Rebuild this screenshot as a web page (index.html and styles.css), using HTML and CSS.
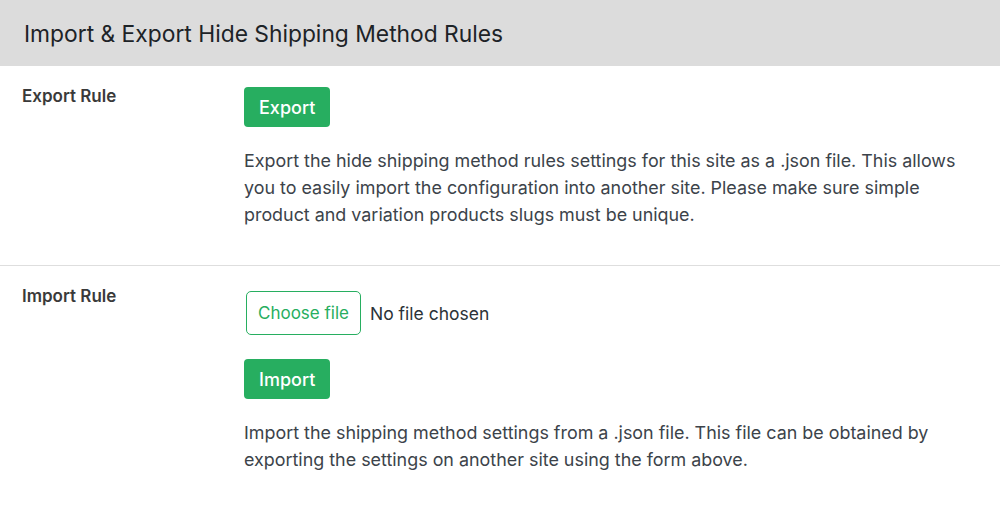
FILE: index.html
```html
<!DOCTYPE html>
<html lang="en">
<head>
    <meta charset="UTF-8">
    <meta name="viewport" content="width=device-width, initial-scale=1.0">
    <title>Import &amp; Export Hide Shipping Method Rules</title>
    <link rel="stylesheet" href="styles.css">
</head>
<body>
    <h2 class="page_title">Import &amp; Export Hide Shipping Method Rules</h2>
    <div class="settings">
        <div class="row">
            <div class="label">Export Rule</div>
            <div class="field">
                <button class="btn">Export</button>
                <p class="desc">Export the hide shipping method rules settings for this site as a .json file. This allows you to easily import the configuration into another site. Please make sure simple product and variation products slugs must be unique.</p>
            </div>
        </div>
        <div class="row">
            <div class="label">Import Rule</div>
            <div class="field">
                <label class="file_pick">
                    <input type="file" class="file_input" accept=".json">
                    <span class="file_btn">Choose file</span>
                    <span class="file_name">No file chosen</span>
                </label>
                <div><button class="btn">Import</button></div>
                <p class="desc">Import the shipping method settings from a .json file. This file can be obtained by exporting the settings on another site using the form above.</p>
            </div>
        </div>
    </div>
</body>
</html>
```

FILE: styles.css
```css
body { margin: 0; background: #fff; font-family: "Inter", "Noto Sans", sans-serif; color: #2c3338; }
.page_title { margin: 0; background: #dcdcdc; height: 66px; display: flex; align-items: center; padding: 0 24px; font-size: 22.8px; font-weight: 400; color: #1d2327; box-sizing: border-box; }
.settings { display: grid; }
.row { display: grid; grid-template-columns: 222px 1fr; padding: 20px 22px 37px; border-bottom: 1px solid #dedede; }
.row:last-child { border-bottom: none; }
.label { font-size: 17px; font-weight: 600; color: #3a3a3a; line-height: 20px; }
.field { padding-top: 1px; }
.btn { background: #27ae60; color: #fff; border: none; border-radius: 4px; height: 40px; padding: 0 15px; font-family: inherit; font-size: 18px; font-weight: 500; cursor: pointer; }
.btn:hover { background: #219150; }
.desc { margin: 20px 0 0; font-size: 17.9px; line-height: 27px; color: #3c434a; max-width: 720px; }
.file_pick { display: flex; align-items: center; gap: 9px; margin: 4px 0 24px 2px; cursor: pointer; }
.file_input { display: none; }
.file_btn { display: flex; align-items: center; height: 44px; padding: 0 11px; box-sizing: border-box; background: #fff; color: #27ae60; border: 1px solid #27ae60; border-radius: 5px; font-size: 17px; }
.file_name { font-size: 17.5px; color: #2c3338; }
```
